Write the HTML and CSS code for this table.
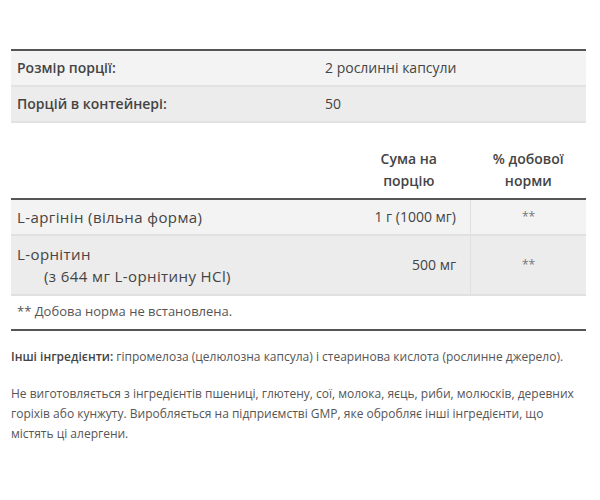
FILE: index.html
```html
<!DOCTYPE html>
<html lang="uk">
<head>
<meta charset="utf-8">
<link rel="stylesheet" href="styles.css">
</head>
<body>
<div class="page">
  <table class="serving">
    <tbody>
      <tr class="odd"><th>Розмір порції:</th><td>2 рослинні капсули</td></tr>
      <tr class="even"><th>Порцій в контейнері:</th><td>50</td></tr>
    </tbody>
  </table>

  <table class="facts">
    <thead>
      <tr><th class="name"></th><th class="amt">Сума на<br>порцію</th><th class="dv">% добової<br>норми</th></tr>
    </thead>
    <tbody>
      <tr class="odd"><td class="name">L-аргінін (вільна форма)</td><td class="amt">1 г (1000 мг)</td><td class="dv">**</td></tr>
      <tr class="even"><td class="name">L-орнітин<br><span class="sub">(з 644 мг L-орнітину HCl)</span></td><td class="amt">500 мг</td><td class="dv">**</td></tr>
      <tr class="foot"><td colspan="3">** Добова норма не встановлена.</td></tr>
    </tbody>
  </table>

  <p class="other"><b>Інші інгредієнти:</b> гіпромелоза (целюлозна капсула) і стеаринова кислота (рослинне джерело).</p>
  <p class="note">Не виготовляється з інгредієнтів пшениці, глютену, сої, молока, яєць, риби, молюсків, деревних горіхів або кунжуту. Виробляється на підприємстві GMP, яке обробляє інші інгредієнти, що містять ці алергени.</p>
</div>
</body>
</html>
```

FILE: styles.css
```css
html, body {
  margin: 0;
  padding: 0;
  background: #fff;
}
.page {
  padding: 49px 14px 0 11px;
  font-family: "Open Sans", "Noto Sans", sans-serif;
  color: #444;
}
table {
  width: 575px;
  border-collapse: collapse;
  font-size: 14px;
}
.serving {
  border-top: 2px solid #555;
}
.serving th, .serving td {
  text-align: left;
  padding: 7px 6px 7px;
  line-height: 20px;
  border-bottom: 2px solid #e2e2e2;
}
.serving th {
  width: 292px;
  font-weight: 600;
  color: #444;
}
.serving td {
  padding-left: 10px;
}
.odd { background: #f3f3f3; }
.even { background: #ececec; }

.facts {
  margin-top: 20px;
  border-bottom: 2px solid #555;
}
.facts thead th {
  font-weight: 600;
  line-height: 22px;
  padding: 5px 6px 6px;
  text-align: center;
  border-bottom: 2px solid #555;
}
.facts td {
  padding: 6px 6px 6px;
  line-height: 22px;
  border-bottom: 2px solid #e0e0e0;
  vertical-align: middle;
}
.facts td.name { text-align: left; font-size: 15px; letter-spacing: 0.4px; }
.facts .amt { width: 103px; text-align: right; padding-right: 14px; }
.facts thead .amt { text-align: center; padding-right: 6px; }
.facts .dv { width: 103px; text-align: center; }
.facts td.dv { border-left: 1px solid #e0e0e0; color: #777; font-size: 12px; }
.facts tr.even td { padding-top: 7px; padding-bottom: 7px; }
.sub { padding-left: 27px; }
.facts tr.foot td {
  background: #fff;
  font-size: 13px;
  color: #555;
  padding: 4px 6px 7px;
  border-bottom: 0;
}
.other, .note {
  font-size: 12px;
  line-height: 20px;
  margin: 0;
  color: #555;
}
.other {
  margin-top: 16px;
}
.other b { color: #444; font-weight: 600; }
.note {
  margin-top: 17px;
}
```
